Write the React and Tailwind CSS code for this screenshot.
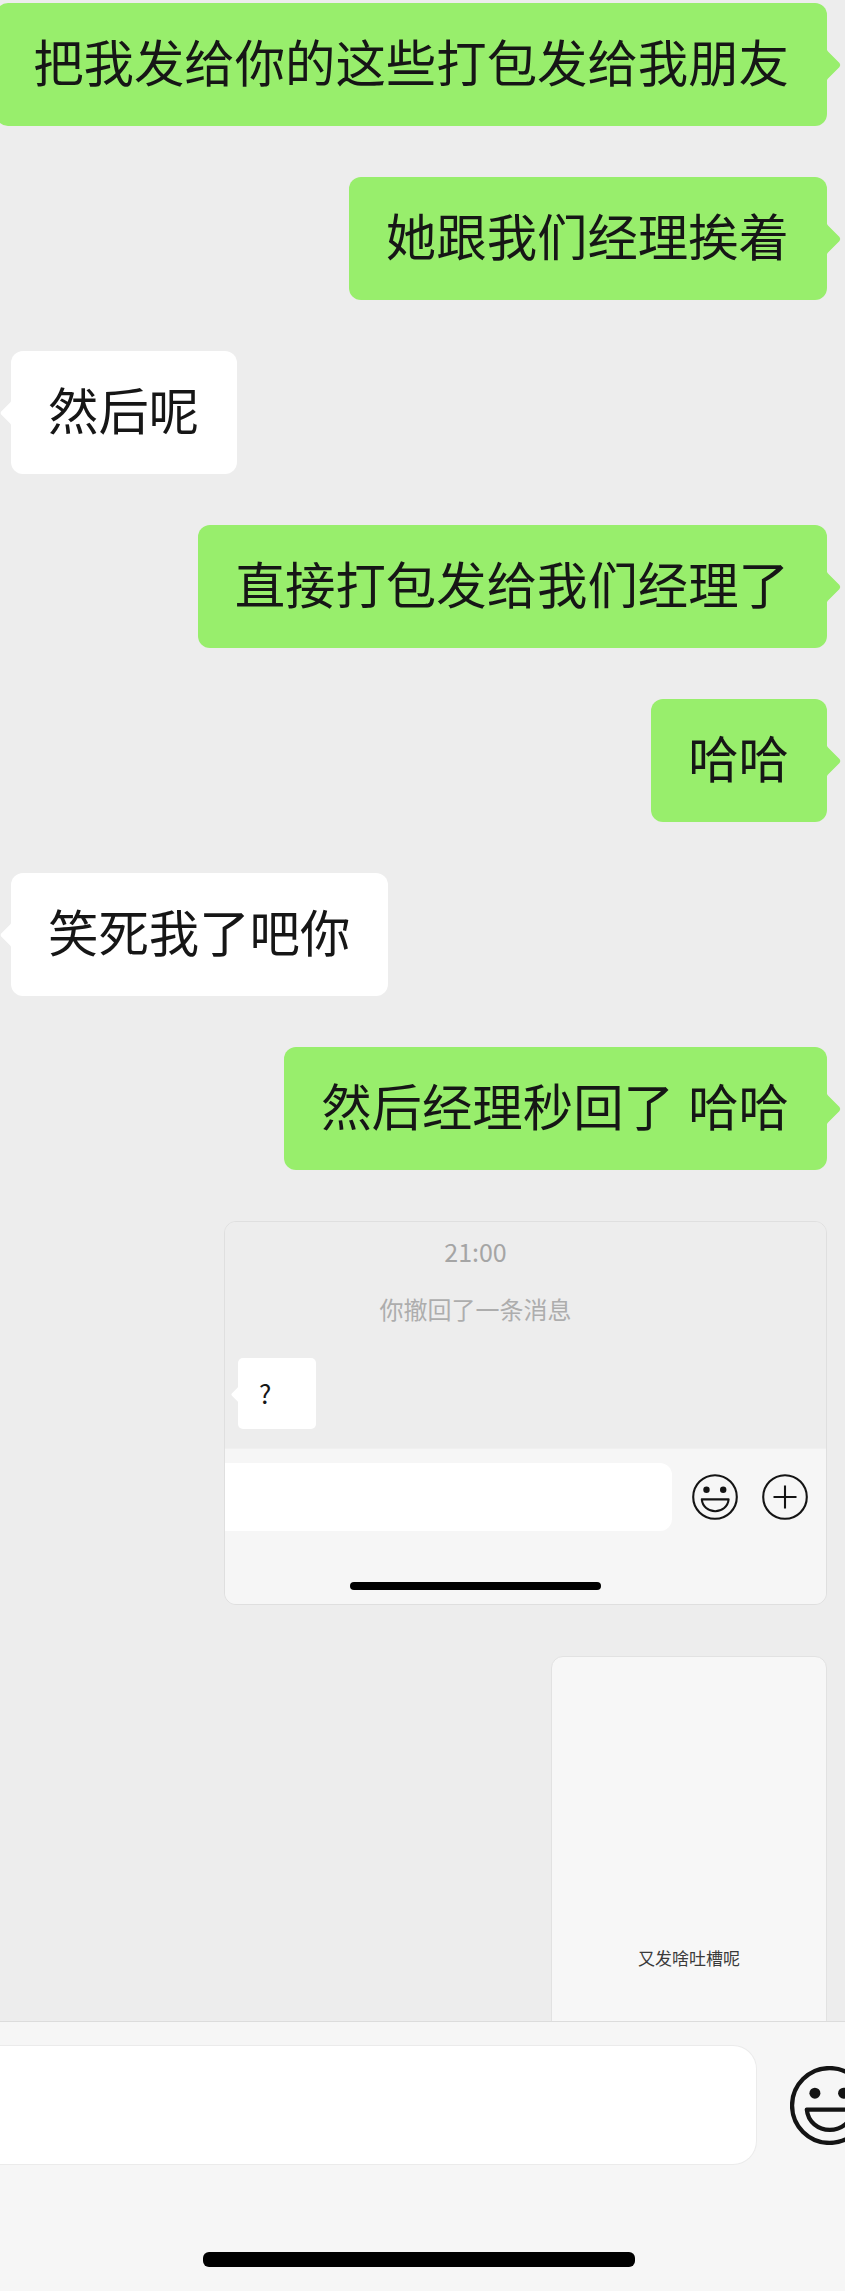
import React from 'react';

const messages = [
  { side: 'right', text: '把我发给你的这些打包发给我朋友' },
  { side: 'right', text: '她跟我们经理挨着' },
  { side: 'left', text: '然后呢' },
  { side: 'right', text: '直接打包发给我们经理了' },
  { side: 'right', text: '哈哈' },
  { side: 'left', text: '笑死我了吧你' },
  { side: 'right', text: '然后经理秒回了 哈哈' },
];

const Tail = ({ side, className, fill }) => (
  <svg viewBox="0 0 14 30" className={className} fill={fill}>
    {side === 'right' ? (
      <path d="M0 0 L1 1.5 L12.5 13 Q14 15 12.5 17 L1 28.5 L0 30 Z" />
    ) : (
      <path d="M14 0 L13 1.5 L1.5 13 Q0 15 1.5 17 L13 28.5 L14 30 Z" />
    )}
  </svg>
);

const Bubble = ({ side, text }) => {
  const isRight = side === 'right';
  return (
    <div className={isRight ? 'flex justify-end pr-[18px]' : 'flex justify-start pl-[11px]'}>
      <div
        className={
          'relative h-[123px] shrink-0 flex items-center pl-[37px] pr-[38px] pb-[6px] rounded-[12px] whitespace-pre text-[50.4px] leading-none [word-spacing:3px] text-[#161616] ' +
          (isRight ? 'bg-[#98ee6c]' : 'bg-white')
        }
      >
        {text}
        {isRight ? (
          <Tail side="right" fill="#98ee6c" className="absolute left-full top-[47px] w-[14px] h-[30px]" />
        ) : (
          <Tail side="left" fill="#ffffff" className="absolute right-full top-[47px] w-[11px] h-[30px]" />
        )}
      </div>
    </div>
  );
};

const Smiley = ({ className, weight = 2.1 }) => (
  <svg viewBox="0 0 46 46" className={className} fill="none" stroke="#141414" strokeWidth={weight}>
    <circle cx="23" cy="23" r="21.8" />
    <circle cx="14.5" cy="15.8" r="3.2" fill="#141414" stroke="none" />
    <circle cx="31.2" cy="15.8" r="3.2" fill="#141414" stroke="none" />
    <path d="M9.8 25.4 H36.6 C36 32.5 30 37.2 23.2 37.2 C16.4 37.2 10.4 32.5 9.8 25.4 Z" strokeLinejoin="round" />
  </svg>
);

const PlusCircle = ({ className }) => (
  <svg viewBox="0 0 46 46" className={className} fill="none" stroke="#141414" strokeWidth="2.1">
    <circle cx="23" cy="23" r="21.8" />
    <path d="M11.5 23 H34.5 M23 11.5 V34.5" />
  </svg>
);

const RecallCard = () => (
  <div className="flex justify-end pr-[18px]">
    <div className="w-[603px] h-[384px] flex flex-col overflow-hidden rounded-[12px] border border-[#dfdfdf]">
      <div className="h-[226px] bg-[#ededed] flex flex-col">
        <div className="w-[501px] mt-[15px] text-center text-[25px] leading-[28px] text-[#a5a5a5]">21:00</div>
        <div className="w-[501px] mt-[30px] text-center text-[24px] leading-[28px] text-[#adadad]">你撤回了一条消息</div>
        <div className="relative ml-[13px] mt-[35px] w-[78px] h-[71px] rounded-[5px] bg-white flex items-center pl-[21px] pb-[2px] text-[26px] text-[#161616]">
          ?
          <Tail side="left" fill="#ffffff" className="absolute right-full top-[29px] w-[7px] h-[15px]" />
        </div>
      </div>
      <div className="flex-1 bg-[#f6f6f6] border-t border-[#f0f0f0] flex flex-col">
        <div className="flex items-center mt-[14px]">
          <div className="w-[447px] h-[68px] bg-white rounded-r-[12px]" />
          <Smiley className="ml-[20px] w-[46px] h-[46px]" />
          <PlusCircle className="ml-[24px] w-[46px] h-[46px]" />
        </div>
        <div className="ml-[125px] mt-[51px] w-[251px] h-[8px] rounded-[4px] bg-black" />
      </div>
    </div>
  </div>
);

const SecondCard = () => (
  <div className="flex justify-end pr-[18px]">
    <div className="w-[276px] h-[500px] shrink-0 rounded-t-[12px] border border-[#e2e2e2] bg-[#f7f7f7] flex flex-col items-center pt-[289px]">
      <div className="text-[17px] leading-[24px] text-[#3a3a3a]">又发啥吐槽呢</div>
    </div>
  </div>
);

export default function App() {
  return (
    <div className="w-[845px] h-[2291px] overflow-hidden flex flex-col bg-[#ededed] font-['Noto_Sans_CJK_SC','Noto_Sans',sans-serif]">
      <div className="h-[2021px] shrink-0 overflow-hidden flex flex-col gap-[51px] pt-[3px]">
        {messages.map((m, i) => (
          <Bubble key={i} side={m.side} text={m.text} />
        ))}
        <RecallCard />
        <SecondCard />
      </div>
      <div className="flex-1 bg-[#f6f6f6] border-t border-[#dcdcdc] flex flex-col overflow-hidden">
        <div className="flex items-center mt-[23px]">
          <div className="w-[757px] h-[120px] shrink-0 bg-white rounded-r-[24px] border border-[#ebebeb] border-l-0" />
          <Smiley weight={2.5} className="ml-[33px] w-[79px] h-[79px] shrink-0" />
        </div>
        <div className="ml-[203px] mt-auto mb-[24px] w-[432px] h-[15px] rounded-[6px] bg-black" />
      </div>
    </div>
  );
}
